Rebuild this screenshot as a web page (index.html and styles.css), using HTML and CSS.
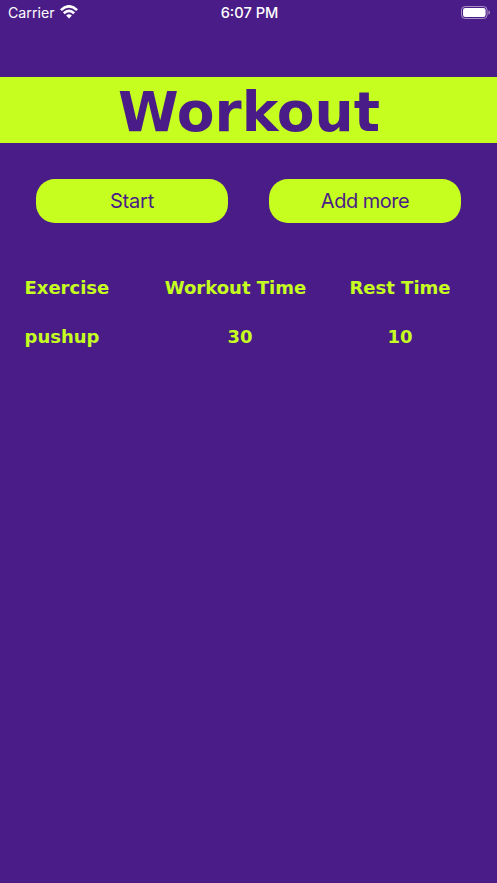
FILE: index.html
```html
<!DOCTYPE html>
<html lang="en">
<head>
<meta charset="utf-8">
<title>Workout</title>
<link rel="stylesheet" href="styles.css">
</head>
<body>
<header class="status">
  <div class="carrier"><span>Carrier</span>
    <svg class="wifi" width="18" height="14" viewBox="0 0 18 14" fill="none" stroke="#fff" stroke-width="2.6"><path d="M.9 5.1Q9-2.5 17.1 5.1M3.8 8.3Q9 3.4 14.2 8.3"/><path d="M6.1 10.6Q9 8 11.9 10.6L9 13.5Z" fill="#fff" stroke="none"/></svg>
  </div>
  <time class="clock">6:07 PM</time>
  <svg class="battery" width="30" height="14" viewBox="0 0 30 14"><rect x=".5" y=".5" width="25.6" height="12" rx="3.6" fill="none" stroke="#fff" stroke-opacity=".5"/><rect x="2" y="2" width="22.6" height="9" rx="2.2" fill="#fff"/><path d="M27.5 4.3Q29 5 29 6.5T27.5 8.7Z" fill="#fff" fill-opacity=".55"/></svg>
</header>
<h1 class="title">Workout</h1>
<div class="actions"><button>Start</button><button class="add">Add more</button></div>
<main class="table">
  <b>Exercise</b><b class="mid heading">Workout Time</b><b class="end">Rest Time</b>
  <b>pushup</b><b class="mid">30</b><b class="end">10</b>
</main>
</body>
</html>
```
FILE: styles.css
```css
* { box-sizing: border-box; }
body { margin: 0; min-height: 883px; background: #4a1c87; color: #c6ff1f; font-family: "DejaVu Sans", sans-serif; }
.status { height: 26px; padding: 0 6px 0 8px; display: grid; grid-template-columns: 1fr auto 1fr; align-items: center; color: #fff; font: 14.2px/26px Inter, sans-serif; }
.carrier { display: flex; align-items: center; gap: 5px; }
.wifi { margin-top: -2px; }
.clock { font-size: 14.6px; font-weight: 500; }
.battery { justify-self: end; }
.title { margin: 51px 0 0; padding-left: 1px; height: 66px; background: #c6ff1f; color: #4a1c87; text-align: center; font-size: 55px; line-height: 71px; font-weight: 700; }
.actions { display: flex; gap: 41px; margin: 36px 36px 0; }
.actions button { flex: 1; height: 44px; padding: 0; border: 0; border-radius: 19px; background: #c6ff1f; color: #4a1c87; font: 20px/44px Inter, sans-serif; letter-spacing: -.2px; }
.actions .add { letter-spacing: -.5px; }
.table { display: grid; grid-template-columns: 140px 151px 169px; grid-auto-rows: 49px; margin: 40px 0 0 24.5px; font-size: 18px; line-height: 49px; white-space: nowrap; }
.mid, .end { text-align: center; }
.heading { margin-left: -9px; }
```
